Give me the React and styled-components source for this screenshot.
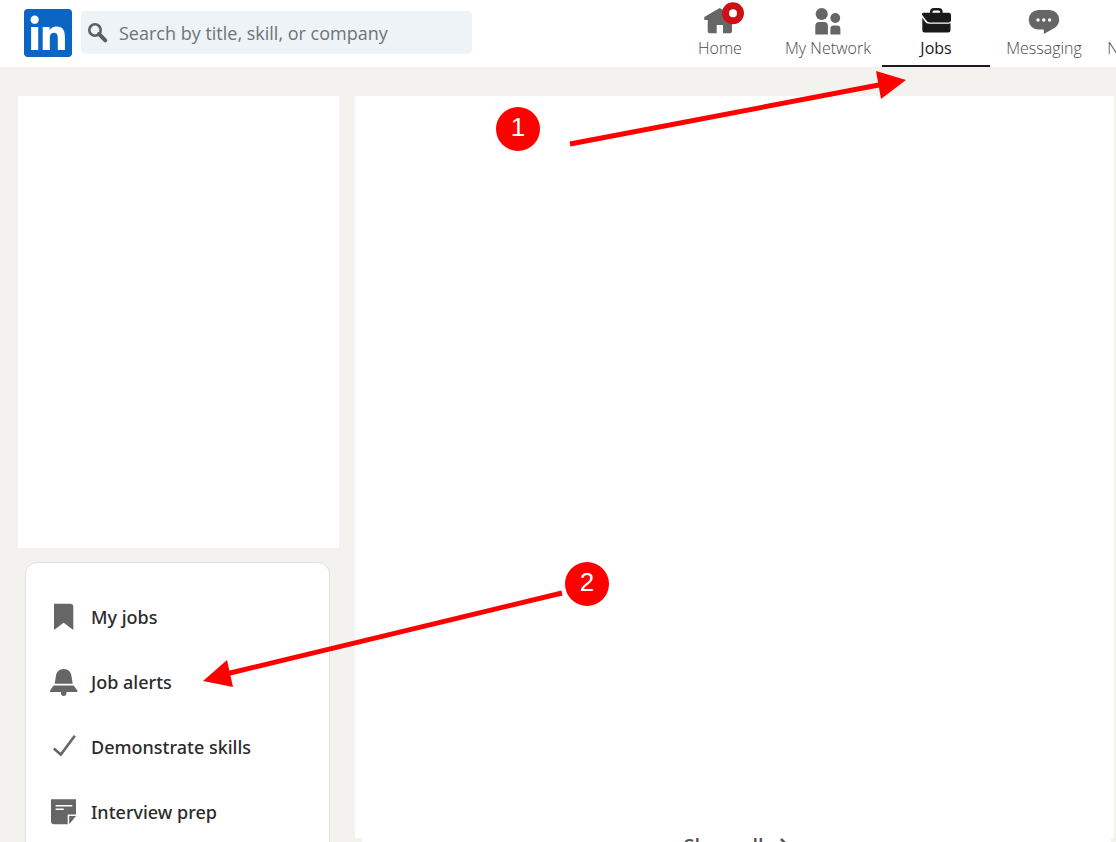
import styled, { createGlobalStyle } from 'styled-components'

const GlobalStyle = createGlobalStyle`
* {
    box-sizing: border-box;
}
body {
    margin: 0px;
    background: #f3f2ee;
    font-family: "Open Sans", "Noto Sans", sans-serif;
}
`

const Page = styled.div`
position: relative;
height: 100vh;
overflow: hidden;
`

const Header = styled.header`
display: flex;
align-items: center;
height: 67px;
padding: 0px 0px 2px 24px;
background: #ffffff;
`

const LogoLink = styled.a`
display: flex;
flex: none;

svg {
    width: 48px;
    height: 48px;
}
`

const SearchBox = styled.label`
display: flex;
align-items: center;
flex: 0 0 391px;
height: 43px;
margin-left: 9px;
padding-left: 5px;
border-radius: 5px;
background: #edf3f7;

svg {
    flex: none;
    width: 24px;
    height: 24px;
}
`

const SearchInput = styled.input`
flex: 1;
min-width: 0;
height: 100%;
margin: 0px;
padding: 0px 9px;
border: none;
outline: none;
background: transparent;
font-family: inherit;
font-size: 18px;
color: #333333;

&::placeholder {
    color: #707478;
    opacity: 1;
}
`

const Nav = styled.nav`
display: flex;
align-self: stretch;
margin-left: auto;
margin-right: -90px;
`

const NavItem = styled.a`
display: flex;
flex-direction: column;
align-items: center;
flex: none;
width: 108px;
height: 67px;
padding-top: 4px;
border-bottom: 2px solid ${props => props.$active ? '#1a1a1a' : 'transparent'};
color: ${props => props.$active ? '#1a1a1a' : '#484848'};
font-size: 16px;
font-weight: ${props => props.$active ? 400 : 300};
line-height: 24px;
text-decoration: none;
white-space: nowrap;

svg {
    flex: none;
    width: 40px;
    height: 32px;
    overflow: visible;
    color: ${props => props.$active ? '#1a1a1a' : '#666666'};
}
`

const Content = styled.div`
display: flex;
align-items: flex-start;
padding: 29px 2px 0px 18px;
`

const Sidebar = styled.aside`
flex: none;
width: 321px;
`

const ProfilePanel = styled.div`
height: 452px;
background: #ffffff;
`

const MenuCard = styled.ul`
margin: 14px 9px 0px 7px;
padding: 21px 22px;
border: 1px solid #e3e2de;
border-radius: 12px;
background: #ffffff;
list-style: none;
`

const MenuLink = styled.a`
display: flex;
align-items: center;
gap: 11px;
height: 65px;
color: #2b2b2b;
font-family: "Noto Sans", "Open Sans", sans-serif;
font-size: 18px;
font-weight: 500;
text-decoration: none;
white-space: nowrap;

svg {
    flex: none;
    width: 32px;
    height: 32px;
}
`

const Main = styled.main`
flex: 1;
min-width: 0;
margin-left: 16px;
`

const MainPanel = styled.div`
height: 742px;
background: #ffffff;
`

const ShowAll = styled.button`
display: flex;
align-items: center;
justify-content: center;
gap: 6px;
width: calc(100% - 10px);
margin: 0px 3px 0px 7px;
padding: 0px;
border: none;
background: #ffffff;
color: #555555;
font-family: inherit;
font-size: 20px;
font-weight: 600;
line-height: 14px;

svg {
    width: 20px;
    height: 16px;
}
`

const Arrows = styled.svg`
position: absolute;
left: 0px;
top: 0px;
width: 910px;
height: 700px;
pointer-events: none;
`

const StepBadge = styled.span`
position: absolute;
left: ${props => props.$x}px;
top: ${props => props.$y}px;
width: 44px;
height: 44px;
border-radius: 50%;
background: #ff0000;
color: #ffffff;
font-family: "Liberation Sans", Arial, sans-serif;
font-size: 26px;
line-height: 40px;
text-align: center;
`

function LogoIcon() {
    return (
        <svg viewBox="0 0 24 24">
            <rect x="2" y="2" width="20" height="20" fill="#ffffff" />
            <path fill="#0a66c2" d="M20.447 20.452h-3.554v-5.569c0-1.328-.027-3.037-1.852-3.037-1.853 0-2.136 1.445-2.136 2.939v5.667H9.351V9h3.414v1.561h.046c.477-.9 1.637-1.85 3.37-1.85 3.601 0 4.267 2.370 4.267 5.455v6.286zM5.337 7.433a2.062 2.062 0 0 1-2.063-2.065 2.064 2.064 0 1 1 2.063 2.065zm1.782 13.019H3.555V9h3.564v11.452zM22.225 0H1.771C.792 0 0 .774 0 1.729v20.542C0 23.227.792 24 1.771 24h20.451C23.200 24 24 23.227 24 22.271V1.729C24 .774 23.200 0 22.222 0h.003z" />
        </svg>
    )
}

function SearchIcon() {
    return (
        <svg viewBox="0 0 24 24" fill="none" stroke="#5c5f61">
            <circle cx="9" cy="9" r="5.7" strokeWidth="2.6" />
            <path d="M13 13l6.3 6.3" strokeWidth="4" strokeLinecap="round" />
        </svg>
    )
}

function HomeIcon() {
    return (
        <svg viewBox="0 0 40 32" fill="currentColor">
            <path d="M19.7 4L4.3 13v3h3.4v11.3a2 2 0 0 0 2 2h7v-8.3h6.3v8.3h7a2 2 0 0 0 2-2V16H35v-3z" />
            <circle cx="33" cy="9.3" r="7.5" fill="#ffffff" stroke="#cc1016" strokeWidth="7" />
        </svg>
    )
}

function NetworkIcon() {
    return (
        <svg viewBox="0 0 40 32" fill="currentColor">
            <circle cx="13.7" cy="10" r="6.1" />
            <path d="M7.3 30.4v-8.4a4 4 0 0 1 4-4h4.6a4 4 0 0 1 4 4v8.4z" />
            <circle cx="27.3" cy="14" r="4.9" />
            <path d="M22.4 30.4v-5.4a3.4 3.4 0 0 1 3.4-3.4h3.2a3.4 3.4 0 0 1 3.4 3.4v5.4z" />
        </svg>
    )
}

function JobsIcon() {
    return (
        <svg viewBox="0 0 40 32" fill="currentColor">
            <path d="M15.200 10V8a2.800 2.800 0 0 1 2.800-2.800h4.600a2.800 2.800 0 0 1 2.800 2.800v2" fill="none" stroke="currentColor" strokeWidth="2.4" />
            <path d="M7.500 8.800h25.300a2.200 2.200 0 0 1 2.200 2.200v5.300c0 1.200-1 2.200-2.200 2.200H14.500c-1.800 0-3.200-.6-4.200-2L6.200 11c-.8-1.200 0-2.200 1.300-2.200z" />
            <path d="M6.300 13.600l2.500 3.600a5.200 5.200 0 0 0 4.500 2.500h19.200c.8 0 1.400-.1 2-.4v6.900a2.200 2.200 0 0 1-2.200 2.200H8.500a2.200 2.200 0 0 1-2.200-2.200z" />
        </svg>
    )
}

function MessagingIcon() {
    return (
        <svg viewBox="0 0 40 32" fill="currentColor">
            <path d="M14.5 6h11a9.7 9.7 0 0 1 9.7 9.7c0 3.6-2 6.4-4.7 8.4L19.8 30v-4.4h-5.3A9.7 9.7 0 0 1 14.5 6z" />
            <g fill="#ffffff">
                <circle cx="14" cy="16" r="1.7" />
                <circle cx="19.8" cy="16" r="1.7" />
                <circle cx="25.6" cy="16" r="1.7" />
            </g>
        </svg>
    )
}

function BellIcon() {
    return (
        <svg viewBox="0 0 32 32" fill="#666666">
            <path d="M15.7 3c4.6 0 7.300 3 7.800 7.200l1.200 7.500h-18l1.200-7.500C8.400 6 11.100 3 15.700 3z" />
            <path d="M5.700 19.400h20l3.600 5V26H2v-1.600z" />
            <path d="M13 26v1.200a2.700 2.700 0 0 0 5.400 0V26z" />
        </svg>
    )
}

function BookmarkIcon() {
    return (
        <svg viewBox="0 0 32 32" fill="#666666">
            <path d="M6 2.700h16.300a3 3 0 0 1 3 3V29l-9.600-7.300L6 29z" />
        </svg>
    )
}

function CheckIcon() {
    return (
        <svg viewBox="0 0 32 32" fill="none" stroke="#666666" strokeWidth="2.6">
            <path d="M5.800 17.600l7 6L26.800 4.800" />
        </svg>
    )
}

function NoteIcon() {
    return (
        <svg viewBox="0 0 32 32" fill="#666666">
            <path d="M3 3.300h25v15.300h-8.300v9.700H6a3 3 0 0 1-3-3z" />
            <path d="M21.200 20.100h6.800l-6.800 8.200z" />
            <path d="M7.600 9.700h16.700M7.600 13.300h8.200" stroke="#ffffff" strokeWidth="1.500" />
        </svg>
    )
}

function ArrowIcon() {
    return (
        <svg viewBox="0 0 20 16" fill="none" stroke="currentColor" strokeWidth="2.5">
            <path d="M1 8h17M11 1l7 7-7 7" />
        </svg>
    )
}

const navItems = [
    { label: 'Home', Icon: HomeIcon },
    { label: 'My Network', Icon: NetworkIcon },
    { label: 'Jobs', Icon: JobsIcon, active: true },
    { label: 'Messaging', Icon: MessagingIcon },
    { label: 'Notifications', Icon: BellIcon },
]

const menuItems = [
    { label: 'My jobs', Icon: BookmarkIcon },
    { label: 'Job alerts', Icon: BellIcon },
    { label: 'Demonstrate skills', Icon: CheckIcon },
    { label: 'Interview prep', Icon: NoteIcon },
]

function App() {
    return (
        <Page>
            <GlobalStyle />
            <Header>
                <LogoLink href="#" aria-label="LinkedIn"><LogoIcon /></LogoLink>
                <SearchBox>
                    <SearchIcon />
                    <SearchInput type="text" aria-label="Search" placeholder="Search by title, skill, or company" />
                </SearchBox>
                <Nav>
                    {navItems.map(({ label, Icon, active }) => (
                        <NavItem key={label} href="#" $active={active}>
                            <Icon />
                            {label}
                        </NavItem>
                    ))}
                </Nav>
            </Header>
            <Content>
                <Sidebar>
                    <ProfilePanel />
                    <MenuCard>
                        {menuItems.map(({ label, Icon }) => (
                            <li key={label}>
                                <MenuLink href="#"><Icon /> {label}</MenuLink>
                            </li>
                        ))}
                    </MenuCard>
                </Sidebar>
                <Main>
                    <MainPanel />
                    <ShowAll>Show all <ArrowIcon /></ShowAll>
                </Main>
            </Content>
            <Arrows viewBox="0 0 910 700" fill="#ff0000" stroke="#ff0000">
                <path d="M570 144L884 84" strokeWidth="5" />
                <path d="M906 80l-30-9 5 28z" stroke="none" />
                <path d="M562 593L226 674" strokeWidth="5" />
                <path d="M203 681l24-21 6 27z" stroke="none" />
            </Arrows>
            <StepBadge $x={496} $y={107}>1</StepBadge>
            <StepBadge $x={565} $y={562}>2</StepBadge>
        </Page>
    )
}

export default App
